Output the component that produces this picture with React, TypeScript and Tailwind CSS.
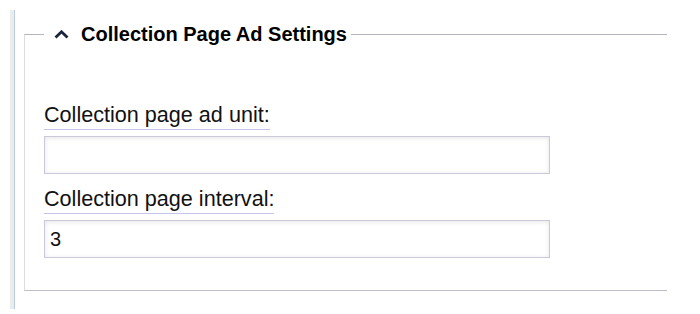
export default function App() {
  return (
    <div className="h-[314px] w-[700px] bg-white font-['Liberation_Sans',Arial,sans-serif] text-[#111]">
      <div className="ml-[10px] flex h-[309px] pt-[10px]">
        <div className="w-[4px] bg-[#ececec]" />
        <div className="w-px bg-[#b9cce6]" />
        <div className="pl-[9px]">
          <fieldset className="mt-[13px] w-[643px] border-t border-b border-l border-t-[#b4b4be] border-b-[#bdbdc9] border-l-[#dcdce4] pb-[32px] pl-[19px] pt-[56px]">
            <legend className="flex items-center pl-[10px] pr-[4px] text-[20px] font-bold leading-[23px] text-black">
              <svg width="15" height="9" viewBox="0 0 15 9" className="mr-[12px]">
                <polyline points="1.5,7.5 7.5,1.8 13.5,7.5" fill="none" stroke="#1c2540" strokeWidth="2.8" />
              </svg>
              Collection Page Ad Settings
            </legend>

            <label className="inline-block border-b border-[#c5c5ea] pb-[2px] text-[21.6px] leading-[25px]">
              Collection page ad unit:
            </label>
            <input
              type="text"
              defaultValue=""
              className="mt-[6px] block h-[38px] w-[506px] border border-[#c9c9d9] bg-white px-[5px] text-[20px] shadow-[inset_0_1px_5px_rgba(0,0,0,0.1)] outline-none"
            />

            <label className="mt-[12px] inline-block border-b border-[#c5c5ea] pb-[2px] text-[21.6px] leading-[25px]">
              Collection page interval:
            </label>
            <input
              type="text"
              defaultValue="3"
              className="mt-[6px] block h-[38px] w-[506px] border border-[#c9c9d9] bg-white px-[5px] text-[20px] shadow-[inset_0_1px_5px_rgba(0,0,0,0.1)] outline-none"
            />
          </fieldset>
        </div>
      </div>
    </div>
  );
}
